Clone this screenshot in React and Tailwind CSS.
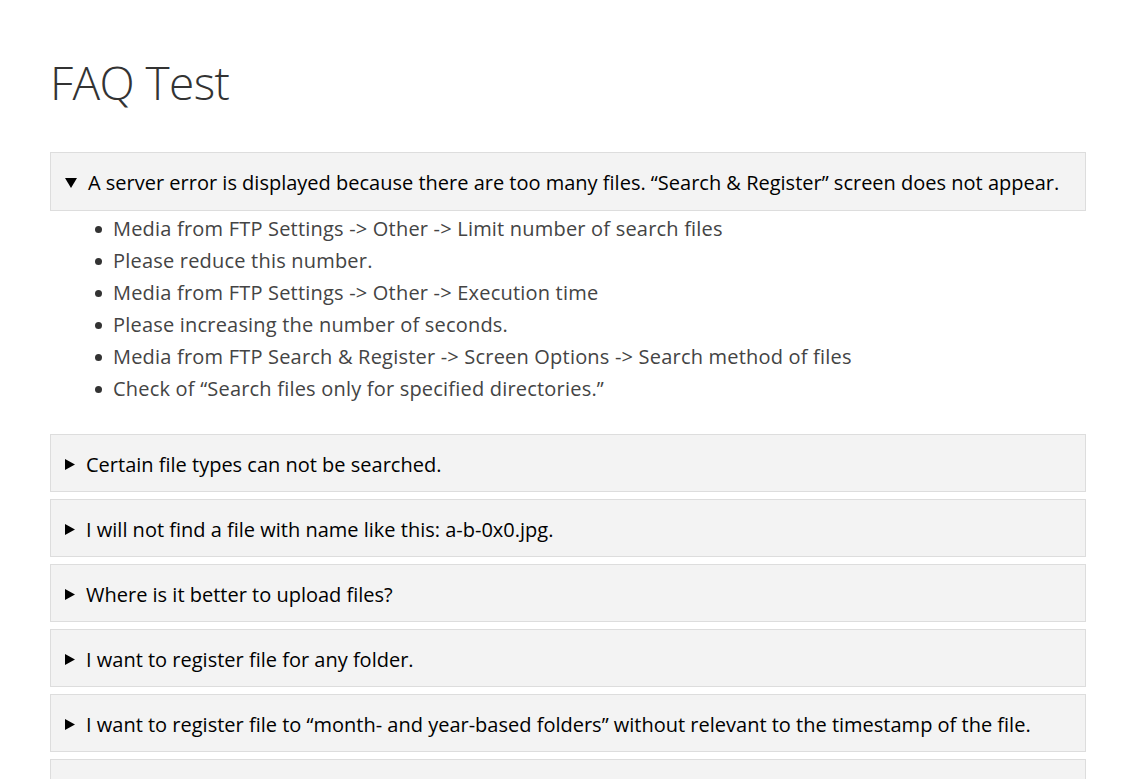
import React from "react";

const faqs = [
  {
    q: "A server error is displayed because there are too many files. \u201cSearch & Register\u201d screen does not appear.",
    open: true,
    a: [
      "Media from FTP Settings -> Other -> Limit number of search files",
      "Please reduce this number.",
      "Media from FTP Settings -> Other -> Execution time",
      "Please increasing the number of seconds.",
      "Media from FTP Search & Register -> Screen Options -> Search method of files",
      "Check of \u201cSearch files only for specified directories.\u201d",
    ],
  },
  { q: "Certain file types can not be searched." },
  { q: "I will not find a file with name like this: a-b-0x0.jpg." },
  { q: "Where is it better to upload files?" },
  { q: "I want to register file for any folder." },
  {
    q: "I want to register file to \u201cmonth- and year-based folders\u201d without relevant to the timestamp of the file.",
  },
  { q: "" },
];

const Arrow = ({ open }) =>
  open ? (
    <svg width="12" height="10" viewBox="0 0 12 10" className="shrink-0">
      <path d="M0 0 L12 0 L6 10 Z" fill="#000" />
    </svg>
  ) : (
    <svg width="10" height="11" viewBox="0 0 10 11" className="shrink-0">
      <path d="M0 0 L10 5.5 L0 11 Z" fill="#000" />
    </svg>
  );

export default function App() {
  return (
    <div
      className="bg-white px-[50px] pt-[52px] overflow-hidden h-[779px]"
      style={{ fontFamily: '"Open Sans", "Noto Sans", sans-serif' }}
    >
      <h1 className="text-[46px] font-light text-[#333] leading-[60px] tracking-[-0.6px]">
        FAQ Test
      </h1>
      <div className="mt-[40px] w-[1036px] flex flex-col gap-[7px]">
        {faqs.map((f, i) => (
          <div key={i}>
            <div
              className={`bg-[#f3f3f3] border border-[#dddddd] ${
                f.open ? "h-[59px]" : "h-[58px]"
              } flex items-center gap-[11px] pl-[14px] pt-[3px] text-[20px] text-black`}
            >
              {f.q && <Arrow open={f.open} />}
              <span>{f.q}</span>
            </div>
            {f.a && (
              <ul className="pl-[45px] pt-[2px] pb-[22px] text-[20px] text-[#444] tracking-[0.2px]">
                {f.a.map((t, j) => (
                  <li key={j} className="flex items-center h-[32px]">
                    <span className="w-[7px] h-[7px] rounded-full bg-[#333] mr-[11px] shrink-0" />
                    {t}
                  </li>
                ))}
              </ul>
            )}
          </div>
        ))}
      </div>
    </div>
  );
}
